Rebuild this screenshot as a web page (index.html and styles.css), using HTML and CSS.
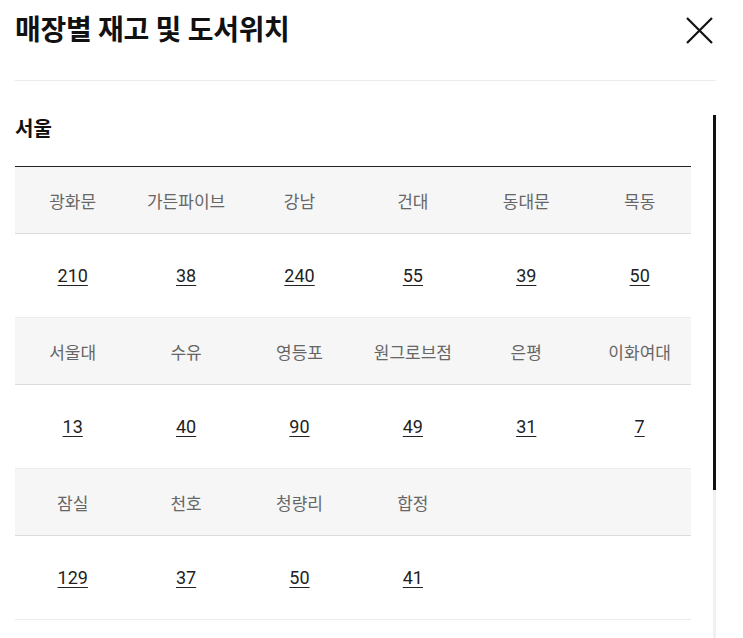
FILE: index.html
```html
<!DOCTYPE html>
<html lang="ko">
<head>
<meta charset="utf-8">
<title>매장별 재고 및 도서위치</title>
<link rel="stylesheet" href="styles.css">
</head>
<body>
<div class="modal">
  <header class="modal-head">
    <h2 class="modal-title">매장별 재고 및 도서위치</h2>
    <button class="close" type="button" aria-label="닫기">
      <svg width="27" height="27" viewBox="0 0 27 27"><path d="M1 1 L26 26 M26 1 L1 26" stroke="#111" stroke-width="2.2" fill="none"/></svg>
    </button>
  </header>
  <div class="modal-body">
    <h3 class="region">서울</h3>
    <div class="stock">
      <div class="row head"><span>광화문</span><span>가든파이브</span><span>강남</span><span>건대</span><span>동대문</span><span>목동</span></div>
      <div class="row vals"><a>210</a><a>38</a><a>240</a><a>55</a><a>39</a><a>50</a></div>
      <div class="row head"><span>서울대</span><span>수유</span><span>영등포</span><span>원그로브점</span><span>은평</span><span>이화여대</span></div>
      <div class="row vals"><a>13</a><a>40</a><a>90</a><a>49</a><a>31</a><a>7</a></div>
      <div class="row head"><span>잠실</span><span>천호</span><span>청량리</span><span>합정</span><span></span><span></span></div>
      <div class="row vals"><a>129</a><a>37</a><a>50</a><a>41</a><span></span><span></span></div>
    </div>
  </div>
  <div class="scrollbar"><div class="thumb"></div></div>
</div>
</body>
</html>
```

FILE: styles.css
```css
* { box-sizing: border-box; }
html, body {
  margin: 0;
  padding: 0;
  background: #fff;
  font-family: Roboto, "Noto Sans CJK KR", sans-serif;
  color: #111;
}
.modal {
  position: relative;
  width: 743px;
  height: 638px;
  overflow: hidden;
}
.modal-head {
  display: flex;
  justify-content: space-between;
  align-items: flex-start;
  height: 81px;
  margin: 0 27px 0 15px;
  padding-top: 12px;
  border-bottom: 1px solid #ebebeb;
}
.modal-title {
  margin: 0;
  font-size: 28px;
  line-height: 38px;
  font-weight: 700;
  letter-spacing: -0.3px;
  color: #111;
}
.close {
  margin: 5px 3px 0 0;
  padding: 0;
  border: 0;
  background: none;
  width: 27px;
  height: 27px;
  display: block;
}
.close svg { display: block; }
.modal-body {
  padding: 34px 52px 0 15px;
}
.region {
  margin: 0 0 23px;
  font-size: 20px;
  line-height: 28px;
  font-weight: 700;
  color: #111;
}
.stock {
  border-top: 1px solid #222;
}
.row {
  display: grid;
  grid-template-columns: repeat(6, 113.4px);
  padding-left: 1px;
  align-items: center;
  justify-items: center;
}
.row.head {
  height: 67px;
  background: #f6f6f6;
  border-bottom: 1px solid #dcdcdc;
  color: #666;
  font-size: 17px;
}
.row.vals {
  height: 84px;
  border-bottom: 1px solid #ececec;
  font-size: 18px;
}
.row.vals a {
  color: #222;
  text-decoration: underline;
  text-underline-offset: 3px;
}
.scrollbar {
  position: absolute;
  left: 713px;
  top: 115px;
  width: 3px;
  height: 523px;
  background: #f0f0f0;
}
.thumb {
  width: 3px;
  height: 375px;
  background: #111;
}
```
